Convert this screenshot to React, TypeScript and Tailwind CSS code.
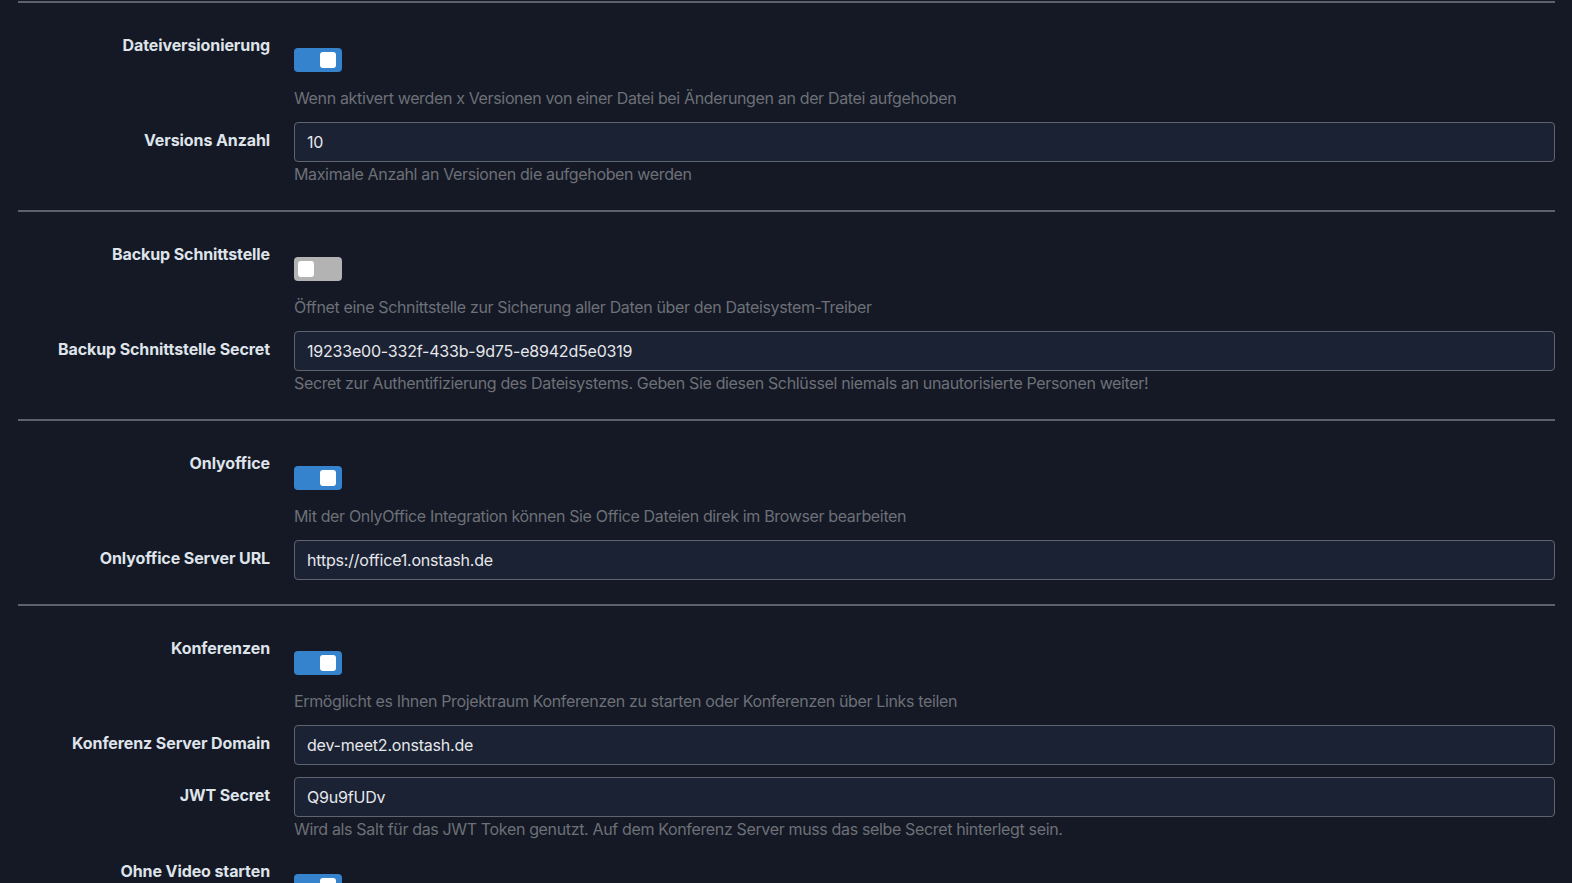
import React from "react";

const font = { fontFamily: "Inter, 'Noto Sans', sans-serif" };

function Toggle({ on }: { on: boolean }) {
  return (
    <div
      className={
        "relative h-6 w-12 rounded-[4px] " + (on ? "bg-[#3683cd]" : "bg-[#b3b3b3]")
      }
    >
      <div
        className={
          "absolute top-1 h-4 w-4 rounded-[3px] bg-white " + (on ? "left-[26px]" : "left-1")
        }
      />
    </div>
  );
}

function Label({ children }: { children: React.ReactNode }) {
  return (
    <div className="pr-6 pt-[6px] text-right text-base font-bold leading-6 tracking-[-0.1px] text-[#dfe3ea]">
      {children}
    </div>
  );
}

function Desc({ children }: { children: React.ReactNode }) {
  return (
    <div className="text-base leading-6 tracking-[-0.35px] text-[#6d7077]">{children}</div>
  );
}

function ToggleRow({ label, on, desc }: { label: string; on: boolean; desc?: string }) {
  return (
    <div className="mb-3 grid grid-cols-[276px_1fr]">
      <Label>{label}</Label>
      <div className="pt-[21px]">
        <Toggle on={on} />
        {desc && (
          <div className="mt-[14px]">
            <Desc>{desc}</Desc>
          </div>
        )}
      </div>
    </div>
  );
}

function InputRow({
  label,
  value,
  desc,
  last,
}: {
  label: string;
  value: string;
  desc?: string;
  last?: boolean;
}) {
  return (
    <div className={"grid grid-cols-[276px_1fr] " + (last ? "" : "mb-3")}>
      <Label>{label}</Label>
      <div>
        <div className="flex h-10 items-center rounded-[4px] border border-[#5f6570] bg-[#1b2233] px-3 text-base tracking-[-0.2px] text-[#e6e8ec]">
          {value}
        </div>
        {desc && <Desc>{desc}</Desc>}
      </div>
    </div>
  );
}

function Hr() {
  return <div className="my-6 h-[2px] bg-[#5d616b]" />;
}

export default function App() {
  return (
    <div
      className="h-[883px] w-full overflow-hidden bg-[#141925] pl-[18px] pr-[17px]"
      style={font}
    >
      <div className="mt-[1px] h-[2px] bg-[#5d616b]" />
      <div className="mt-6">
        <ToggleRow
          label="Dateiversionierung"
          on
          desc="Wenn aktivert werden x Versionen von einer Datei bei Änderungen an der Datei aufgehoben"
        />
        <InputRow
          label="Versions Anzahl"
          value="10"
          desc="Maximale Anzahl an Versionen die aufgehoben werden"
          last
        />
      </div>
      <Hr />
      <div>
        <ToggleRow
          label="Backup Schnittstelle"
          on={false}
          desc="Öffnet eine Schnittstelle zur Sicherung aller Daten über den Dateisystem-Treiber"
        />
        <InputRow
          label="Backup Schnittstelle Secret"
          value="19233e00-332f-433b-9d75-e8942d5e0319"
          desc="Secret zur Authentifizierung des Dateisystems. Geben Sie diesen Schlüssel niemals an unautorisierte Personen weiter!"
          last
        />
      </div>
      <Hr />
      <div>
        <ToggleRow
          label="Onlyoffice"
          on
          desc="Mit der OnlyOffice Integration können Sie Office Dateien direk im Browser bearbeiten"
        />
        <InputRow label="Onlyoffice Server URL" value="https://office1.onstash.de" last />
      </div>
      <Hr />
      <div>
        <ToggleRow
          label="Konferenzen"
          on
          desc="Ermöglicht es Ihnen Projektraum Konferenzen zu starten oder Konferenzen über Links teilen"
        />
        <InputRow label="Konferenz Server Domain" value="dev-meet2.onstash.de" />
        <InputRow
          label="JWT Secret"
          value="Q9u9fUDv"
          desc="Wird als Salt für das JWT Token genutzt. Auf dem Konferenz Server muss das selbe Secret hinterlegt sein."
        />
        <ToggleRow label="Ohne Video starten" on />
      </div>
    </div>
  );
}
